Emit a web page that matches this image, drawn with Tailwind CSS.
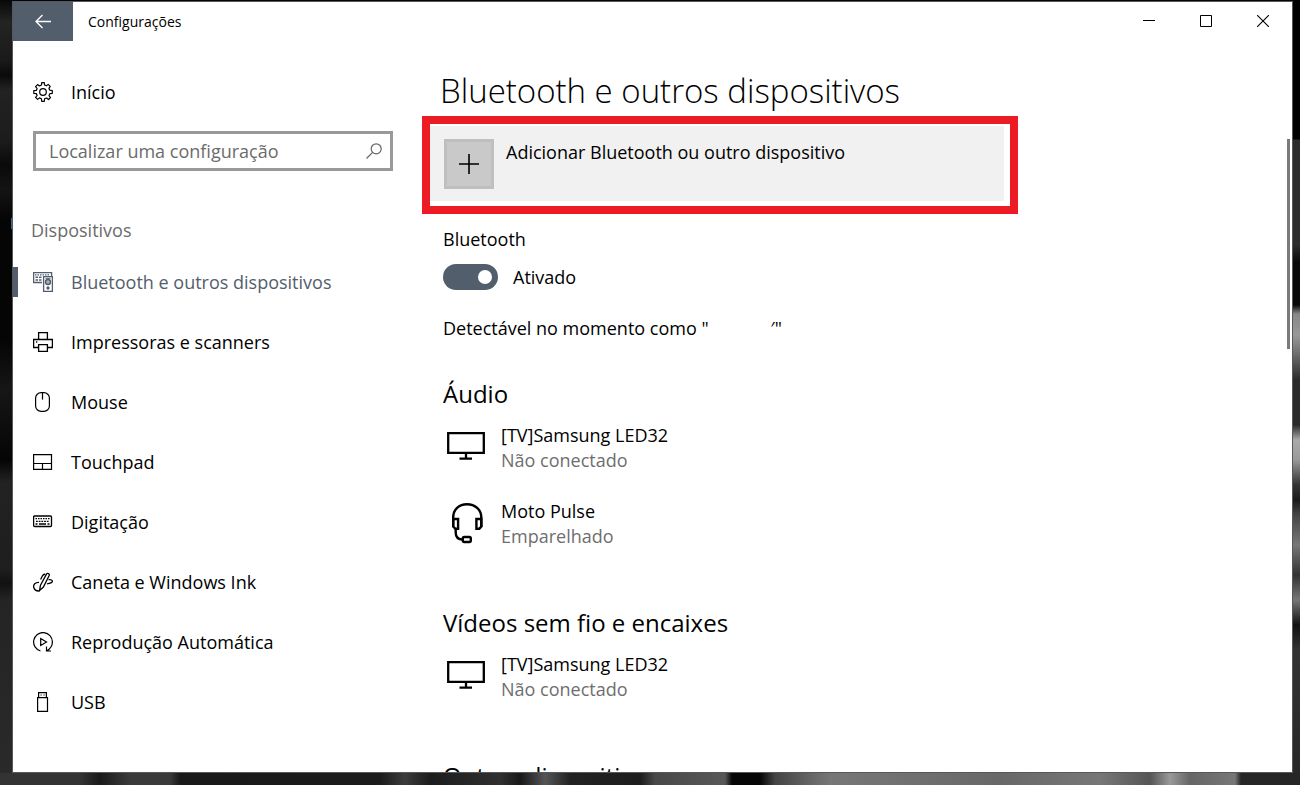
<!DOCTYPE html>
<html lang="pt-BR">
<head>
  <meta charset="UTF-8">
  <meta name="viewport" content="width=device-width, initial-scale=1.0">
  <title>Configurações</title>
  <script src="https://cdn.jsdelivr.net/npm/@tailwindcss/browser@4"></script>
  <style>
    /* Desktop wallpaper, visible around the window */
    .wallpaper {
      background:
        linear-gradient(#3f6a90, #3f6a90) 11px 218px / 1px 11px no-repeat,
        linear-gradient(to right, #333 0 80px, #1a1a1a 100px, #3a3a3a 130px, #3a3a3a 170px, #191919 180px, #1b1b1b 380px, #3c3c3c 405px, #1c1c1c 430px, #303030 500px, #181818 520px, #555 545px, #222 570px, #1d1d1d 640px, #484848 655px, #585858 725px, #060606 732px, #060606 760px, #444 775px, #777 830px, #686868 1000px, #777 1100px, #555 1150px, #999 1170px, #666 1190px, #777 1235px, #262626 1241px) left bottom / 100% 12px no-repeat,
        linear-gradient(to bottom, #000 0 139px, #2c2c2c 140px 245px, #0a0a0a 262px 305px, #888 314px, #999 335px, #777 350px, #2a2a2a 380px 425px, #aaa 440px, #999 460px, #333 485px, #1a1a1a 500px, #444 515px, #777 545px, #333 575px, #777 600px, #111 625px, #333 650px, #262626 100%) right top / 8px 100% no-repeat,
        linear-gradient(to bottom, #080808 0, #242424 22px, #1a1a1a 60px, #0a0a0a 75px, #222 90px, #1c1c1c 140px, #0a0a0a 165px, #141414 190px, #050505 220px 340px, #161616 390px, #050505 460px, #222 482px, #1e1e1e 570px, #111 583px, #242424 600px, #2a2a2a 100%) left top / 13px 100% no-repeat,
        #050505;
    }
  </style>
</head>
<body class="wallpaper h-screen overflow-hidden pt-px pr-[7px] pb-3 pl-3 font-['Open_Sans','Noto_Sans',sans-serif] text-[18px] text-black">

<!-- Shared icons -->
<svg class="hidden">
  <symbol id="icon-tv" viewBox="0 0 40 30">
    <path d="M2.2 2.2h35.6v19.6H2.2zM20 22v5M13.500 27.700h12.500" fill="none" stroke="currentColor" stroke-width="2.3"/>
  </symbol>
</svg>

<div class="flex h-full flex-col overflow-hidden border border-[#55585c] bg-white">
  <!-- Title bar -->
  <header class="flex h-[39px] shrink-0 items-center pr-px">
    <button aria-label="Voltar" class="flex h-full w-[60px] items-center justify-center bg-[#525e6c] text-white">
      <svg class="h-4 w-4" viewBox="0 0 16 16" fill="none" stroke="currentColor" stroke-width="1.3"><path d="M16 7.500H1M7.500 1L1 7.500l6.500 6.500"/></svg>
    </button>
    <span class="ml-[15px] flex-1 text-[14px]">Configurações</span>
    <button aria-label="Minimizar" class="flex h-[38px] w-[57px] items-center justify-center self-start">
      <svg class="h-3 w-3" viewBox="0 0 12 12" stroke="currentColor"><path d="M0 5.500h12"/></svg>
    </button>
    <button aria-label="Maximizar" class="flex h-[38px] w-[57px] items-center justify-center self-start">
      <svg class="h-3 w-3" viewBox="0 0 12 12" fill="none" stroke="currentColor"><path d="M.5.5h11v11H.5z"/></svg>
    </button>
    <button aria-label="Fechar" class="flex h-[38px] w-[57px] items-center justify-center self-start">
      <svg class="h-3 w-3" viewBox="0 0 12 12" stroke="currentColor" stroke-width="1.1"><path d="M0 0l12 12M12 0L0 12"/></svg>
    </button>
  </header>

  <div class="flex min-h-0 flex-1">
    <!-- Sidebar -->
    <aside class="w-[409px] shrink-0 overflow-hidden pt-[21px]">
      <a href="#" class="flex h-[60px] items-center gap-[18px] pl-5">
        <svg class="h-5 w-5" viewBox="0 0 20 20" fill="none" stroke="currentColor" stroke-width="1.2" stroke-linejoin="round">
          <circle cx="10" cy="10" r="3.300"/>
          <path d="M8.500 3L8.700.7h2.600L11.500 3l1.900.8L15.200 2.400l2 2L15.900 6.300l.9 1.900 2.500.3v2.800l-2.500.3-.8 2 1.500 1.900-2 2-1.900-1.500-2 .8-.3 2.500H8.700L8.400 16.800l-1.900-.9-1.900 1.500-2-2 1.500-1.900-.8-1.900-2.500-.3V8.700l2.500-.3.8-1.900L2.600 4.600l2-2 1.900 1.400z"/>
        </svg>
        Início
      </a>

      <div class="mt-[9px] mr-[29px] ml-5 flex h-10 items-center border-[3px] border-[#999] pr-2 pl-[13px]">
        <input type="text" aria-label="Localizar uma configuração" placeholder="Localizar uma configuração" class="min-w-0 flex-1 outline-none placeholder:text-[#6b6b6b]">
        <svg class="h-4 w-4 text-[#666]" viewBox="0 0 16 16" fill="none" stroke="currentColor" stroke-width="1.200"><circle cx="10.200" cy="5.800" r="5"/><path d="M6.600 9.400L.5 15.500"/></svg>
      </div>

      <h2 class="mt-[39px] pl-[18px] leading-10 text-[#6b6b6b]">Dispositivos</h2>

      <nav class="mt-[2px]">
        <a href="#" class="flex h-[60px] items-center text-[#525e6c]">
          <span class="mr-[15px] h-[30px] w-[5px] bg-[#525e6c]"></span>
          <svg class="mr-[18px] h-5 w-5" viewBox="0 0 20 20" fill="none" stroke="currentColor">
            <path d="M9 10.500H.6v-10h18v3.500" stroke-width="1.300"/>
            <path d="M2 2.800h15" stroke-width="1.200" stroke-dasharray="1.500 1"/>
            <path d="M2.500 5.300h6M2.500 8h6" stroke-width="1.600" stroke-dasharray="2.500 1"/>
            <path d="M10.600 4.600h8.800v14.800h-8.800z" stroke-width="1.300"/>
            <circle cx="15" cy="10" r="2.500" fill="#aab1b9" stroke-width="1.400"/>
            <circle cx="15" cy="16" r="1.200" fill="currentColor"/><path d="M12.500 6.300h5"/>
          </svg>
          Bluetooth e outros dispositivos
        </a>
        <a href="#" class="flex h-[60px] items-center gap-[18px] pl-5">
          <svg class="h-5 w-5" viewBox="0 0 20 20" fill="none" stroke="currentColor" stroke-width="1.300">
            <path d="M5.600 7.500V.6h8.800v6.900M5.500 15.500H.6v-8h18.800v8h-4.900M5.600 12.600h8.800v6.800H5.600z"/><path d="M3 10h1.300"/>
          </svg>
          Impressoras e scanners
        </a>
        <a href="#" class="flex h-[60px] items-center gap-[18px] pl-5">
          <svg class="h-5 w-5" viewBox="0 0 20 20" fill="none" stroke="currentColor" stroke-width="1.200">
            <rect x="2.600" y=".6" width="13.800" height="18.800" rx="5.500"/><path d="M9.500.6v7"/>
          </svg>
          Mouse
        </a>
        <a href="#" class="flex h-[60px] items-center gap-[18px] pl-5">
          <svg class="h-5 w-5" viewBox="0 0 20 20" fill="none" stroke="currentColor" stroke-width="1.200">
            <path d="M.6 2.600h17.900v14.800H.6zM.6 11.500h17.900M9.500 11.500v5.900"/>
          </svg>
          Touchpad
        </a>
        <a href="#" class="flex h-[60px] items-center gap-[18px] pl-5">
          <svg class="h-5 w-5" viewBox="0 0 20 20" fill="none" stroke="currentColor">
            <rect x=".6" y="4" width="17.900" height="10.500" rx="1" stroke-width="1.300"/>
            <path d="M2.500 6.700h14.500" stroke-width="1.300" stroke-dasharray="1.500 1"/>
            <path d="M3 9.300h13.500" stroke-width="1.300" stroke-dasharray="1.800 .9"/>
            <path d="M2.500 12h2M6 12h7M14.500 12h2" stroke-width="1.300"/>
          </svg>
          Digitação
        </a>
        <a href="#" class="flex h-[60px] items-center gap-[18px] pl-5">
          <svg class="h-5 w-5" viewBox="0 0 20 20" fill="none" stroke="currentColor" stroke-width="1.300" stroke-linejoin="round">
            <path d="M6.500 18.500l1-5.300L13.600 1.900c.7-1.200 3.300-.2 2.700 1.400L10.500 14.900zM12.200 2.300c-1.500-.4-2.200.5-3 2L7.600 7.500"/>
            <path d="M6 10.300c-3.700-.1-6 2.400-5.200 5.200.7 2.500 3.500 3.700 6 3.400M15.500 7.700c2.500-.4 4.200.6 3.800 2-.4 1.500-3 1.400-5.300 2.300"/>
          </svg>
          Caneta e Windows Ink
        </a>
        <a href="#" class="flex h-[60px] items-center gap-[18px] pl-5">
          <svg class="h-5 w-5" viewBox="0 0 20 20" fill="none" stroke="currentColor" stroke-width="1.200">
            <path d="M7.500 19A9.400 9.400 0 1 1 19.400 10c0 3.600-2 6.800-5.800 9M13.500 14.500V19h4.500M7.700 6.500v7l5.800-3.500z"/>
          </svg>
          Reprodução Automática
        </a>
        <a href="#" class="flex h-[60px] items-center gap-[18px] pl-5">
          <svg class="h-5 w-5" viewBox="0 0 20 20" fill="none" stroke="currentColor" stroke-width="1.200">
            <path d="M5.600 6V.6h7.800V6M4.600 5.600h9.900v13.800H4.600z"/><path d="M7.500 3h1.200M10.500 3h1.200"/>
          </svg>
          USB
        </a>
      </nav>
    </aside>

    <!-- Content -->
    <main class="min-w-0 flex-1 overflow-hidden">
      <h1 class="h-[75px] pt-[26px] pl-[18px] text-[33px] leading-12 font-light whitespace-nowrap">Bluetooth e outros dispositivos</h1>

      <div class="max-w-[596px] border-8 border-[#ed1c24] pt-[2px] pr-[6px] pb-[5px]">
        <button class="flex h-[75px] w-full items-start gap-3 bg-[#f1f1f1] pt-[13px] pl-[14px] text-left">
          <span class="flex h-[50px] w-[50px] shrink-0 items-center justify-center border-[3px] border-[#bfbfbf] bg-[#c9c9c9]">
            <svg class="h-5 w-5" viewBox="0 0 20 20" stroke="currentColor" stroke-width="1.600"><path d="M0 10h20M10 0v20"/></svg>
          </span>
          <span class="leading-[26px]">Adicionar Bluetooth ou outro dispositivo</span>
        </button>
      </div>

      <div class="pt-3 pl-[21px] leading-[26px]">
        <label for="bluetooth" class="block">Bluetooth</label>
        <div class="mt-3 flex h-[26px] items-center gap-[15px]">
          <input id="bluetooth" type="checkbox" role="switch" checked class="h-[26px] w-[55px] appearance-none rounded-full bg-[#a0a0a0] p-[6px] before:block before:h-[14px] before:w-[14px] before:rounded-full before:bg-white checked:bg-[#525e6c] checked:before:ml-[29px]">
          <span>Ativado</span>
        </div>
        <p class="mt-[25px]">Detectável no momento como "<span class="inline-block w-[62px]"></span>′"</p>

        <section class="mt-[37px]">
          <h2 class="text-[24px] leading-8">Áudio</h2>
          <ul class="mt-[13px] space-y-[26px] leading-[25px]">
            <li class="flex gap-3">
              <svg class="mt-2 h-[30px] w-[46px]"><use href="#icon-tv"/></svg>
              <div>
                <p>[TV]Samsung LED32</p>
                <p class="text-[#6e6e6e]">Não conectado</p>
              </div>
            </li>
            <li class="flex gap-3">
              <svg class="mt-[3px] h-[42px] w-[46px]" viewBox="0 0 46 42" fill="none" stroke="currentColor" stroke-width="2.400">
                <path d="M10.200 25V15.500C10.200 7.500 16 2.200 24 2.200S38.300 7.500 38.300 15.500V25"/>
                <path d="M10.200 17h4.900v9.800h-2.600l-2.300-2.300zM38.300 17h-4.900v9.800h2.900l2-2.300z"/>
                <path d="M12.700 27v3.500c0 4.200 2.500 7 7 7"/><rect x="19.800" y="35" width="8" height="5" rx="1.500"/>
              </svg>
              <div>
                <p>Moto Pulse</p>
                <p class="text-[#6e6e6e]">Emparelhado</p>
              </div>
            </li>
          </ul>
        </section>

        <section class="mt-[58px]">
          <h2 class="text-[24px] leading-8">Vídeos sem fio e encaixes</h2>
          <ul class="mt-[13px] leading-[25px]">
            <li class="flex gap-3">
              <svg class="mt-2 h-[30px] w-[46px]"><use href="#icon-tv"/></svg>
              <div>
                <p>[TV]Samsung LED32</p>
                <p class="text-[#6e6e6e]">Não conectado</p>
              </div>
            </li>
          </ul>
        </section>

        <section class="mt-[58px]">
          <h2 class="text-[24px] leading-8">Outros dispositivos</h2>
        </section>
      </div>
    </main>

    <!-- Scrollbar -->
    <div class="mt-[98px] mr-[2px] h-[210px] w-[3px] shrink-0 bg-[#7a7a7a]"></div>
  </div>
</div>

</body>
</html>
